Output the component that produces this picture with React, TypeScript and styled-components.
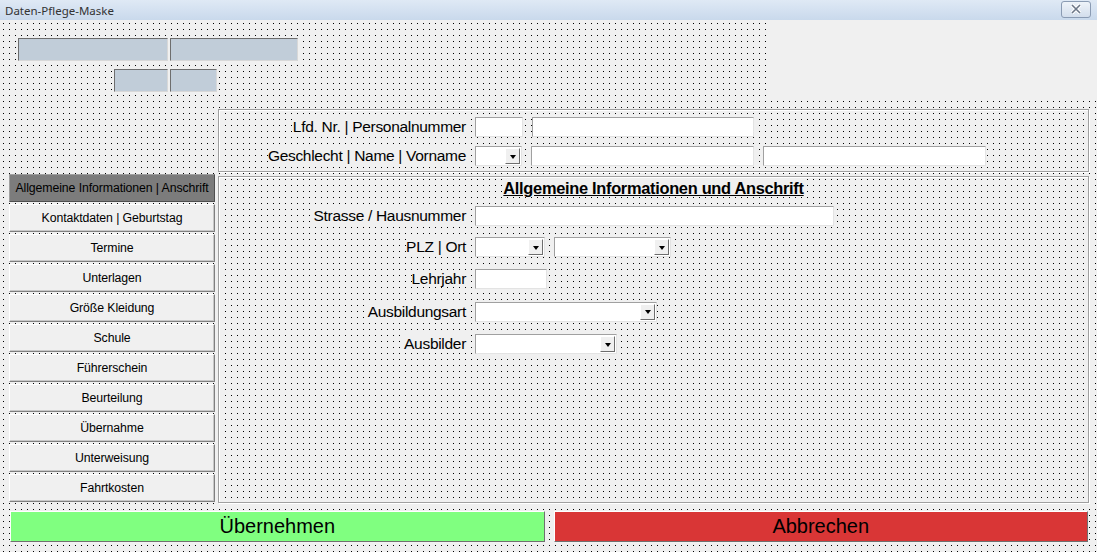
import React from "react";
import styled, { createGlobalStyle } from "styled-components";

const Global = createGlobalStyle`
  html, body { margin: 0; padding: 0; background: #f0f0f0; }
  body { width: 1097px; height: 552px; overflow: hidden; font-family: "Liberation Sans", Arial, sans-serif; }
`;

const dotSvg = encodeURIComponent(
  '<svg xmlns="http://www.w3.org/2000/svg" width="6" height="6"><rect x="0" y="0" width="1" height="1" fill="#000"/></svg>'
);

const dots = `
  background-color: #f0f0f0;
  background-image: url("data:image/svg+xml,${dotSvg}");
  background-size: 6px 6px;
  background-position: 3px 3px;
`;

const Window = styled.div`width:1097px;height:552px;display:flex;flex-direction:column;`;
const TitleBar = styled.div`
  height: 20px; flex: none; display: flex; align-items: center; justify-content: space-between;
  background: linear-gradient(#dfe9f5, #c9d9ec);
  font-family: "Noto Sans", "DejaVu Sans", sans-serif; font-size: 11.5px; color: #333; padding: 0 6px 0 5px;
`;
const CloseBtn = styled.div`
  width: 28px; height: 15px; border: 1px solid #8a9bb3; border-radius: 3px;
  background: linear-gradient(#eef3f9, #d3deec); display: flex; align-items: center; justify-content: center;
  margin-top: -2px;
`;
const Body = styled.div`flex:1;${dots};display:flex;flex-direction:column;`;
const Top = styled.div`height:89px;display:flex;`;
const TopLeft = styled.div`flex:1;display:flex;flex-direction:column;padding:18px 0 0 18px;gap:8px;`;
const TopRow = styled.div<{ $indent?: number }>`display:flex;gap:2px;margin-left:${p => p.$indent || 0}px;`;
const Tile = styled.div<{ $w: number }>`
  width:${p => p.$w}px;height:23px;box-sizing:border-box;background:#c1cdd9;
  border:1px solid #6e6e6e;border-right-color:#d8d8d8;border-bottom-color:#d8d8d8;
`;
const Plain = styled.div`width:327px;height:80px;background:#f0f0f0;`;
const Middle = styled.div`display:flex;padding-left:9px;gap:3px;`;
const Nav = styled.div`width:206px;display:flex;flex-direction:column;gap:2px;margin-top:65px;`;
const NavBtn = styled.div<{ $active?: boolean }>`
  height:28px;box-sizing:border-box;display:flex;align-items:center;justify-content:center;
  font-size:12.3px;color:#000;background:${p => (p.$active ? "#7c7c7c" : "#f0f0f0")};
  border:1px solid;border-color:${p => (p.$active ? "#a0a0a0 #505050 #505050 #a0a0a0" : "#fff #808080 #808080 #fff")};
  box-shadow:${p => (p.$active ? "none" : "inset -1px -1px 0 #c8c8c8")};
  white-space:nowrap;letter-spacing:-0.1px;
`;
const Right = styled.div`width:871px;display:flex;flex-direction:column;gap:4px;`;
const Frame = styled.div<{ $h: number }>`
  height:${p => p.$h}px;box-sizing:border-box;border:1px solid #a0a0a0;box-shadow:inset 1px 1px 0 #fff, 1px 1px 0 #fff;
  display:flex;flex-direction:column;
`;
const Heading = styled.div`
  text-align:center;margin:2px 0 3px 0;
  span{font-weight:bold;font-size:16.4px;text-decoration:underline;letter-spacing:-0.3px;background:#f0f0f0;}
`;
const Row = styled.div<{ $h: number }>`height:${p => p.$h}px;display:flex;align-items:center;gap:9px;`;
const Label = styled.div`
  width:247px;text-align:right;
  span{font-size:15.5px;color:#000;letter-spacing:-0.3px;background:#f0f0f0;}
`;
const Inputs = styled.div`display:flex;gap:9px;align-items:center;`;
const Input = styled.div<{ $w: number }>`
  width:${p => p.$w}px;height:20px;box-sizing:border-box;background:#fff;
  border:1px solid #a0a0a0;border-right-color:#e3e3e3;border-bottom-color:#e3e3e3;position:relative;
`;
const Arrow = styled.div`
  position:absolute;right:1px;top:1px;bottom:1px;width:15px;background:#f0f0f0;box-sizing:border-box;
  border:1px solid;border-color:#fff #6e6e6e #6e6e6e #fff;display:flex;align-items:center;justify-content:center;
  &::after{content:"";border-left:3.5px solid transparent;border-right:3.5px solid transparent;border-top:4px solid #000;margin-top:1px;}
`;
const Bottom = styled.div`display:flex;gap:9px;padding:8px 9px 0 10px;`;
const BigBtn = styled.div<{ $bg: string }>`
  flex:1;height:31px;box-sizing:border-box;background:${p => p.$bg};display:flex;align-items:center;justify-content:center;
  font-size:20px;color:#000;border:1px solid;border-color:#fff #707070 #707070 #fff;
`;

const Combo = ({ w }: { w: number }) => (
  <Input $w={w}>
    <Arrow />
  </Input>
);

const navItems = [
  "Allgemeine Informationen | Anschrift",
  "Kontaktdaten | Geburtstag",
  "Termine",
  "Unterlagen",
  "Größe Kleidung",
  "Schule",
  "Führerschein",
  "Beurteilung",
  "Übernahme",
  "Unterweisung",
  "Fahrtkosten",
];

const L = ({ children }: { children: string }) => (
  <Label>
    <span>{children}</span>
  </Label>
);

export default function App() {
  return (
    <Window>
      <Global />
      <TitleBar>
        <span>Daten-Pflege-Maske</span>
        <CloseBtn>
          <svg width="14" height="10" viewBox="0 0 14 10">
            <path d="M3 1 L11 9 M11 1 L3 9" stroke="#fff" strokeWidth="3.5" />
            <path d="M3 1 L11 9 M11 1 L3 9" stroke="#6b7687" strokeWidth="1.6" />
          </svg>
        </CloseBtn>
      </TitleBar>
      <Body>
        <Top>
          <TopLeft>
            <TopRow>
              <Tile $w={150} />
              <Tile $w={128} />
            </TopRow>
            <TopRow $indent={96}>
              <Tile $w={54} />
              <Tile $w={47} />
            </TopRow>
          </TopLeft>
          <Plain />
        </Top>
        <Middle>
          <Nav>
            {navItems.map((t, i) => (
              <NavBtn key={t} $active={i === 0}>{t}</NavBtn>
            ))}
          </Nav>
          <Right>
            <Frame $h={63}>
              <Row $h={31} style={{ marginTop: 2 }}>
                <L>Lfd. Nr. | Personalnummer</L>
                <Inputs>
                  <Input $w={48} />
                  <Input $w={222} />
                </Inputs>
              </Row>
              <Row $h={31}>
                <L>Geschlecht | Name | Vorname</L>
                <Inputs>
                  <Combo w={47} />
                  <Input $w={223} />
                  <Input $w={223} />
                </Inputs>
              </Row>
            </Frame>
            <Frame $h={327}>
              <Heading>
                <span>Allgemeine Informationen und Anschrift</span>
              </Heading>
              <Row $h={30}>
                <L>Strasse / Hausnummer</L>
                <Input $w={359} />
              </Row>
              <Row $h={32}>
                <L>PLZ | Ort</L>
                <Inputs>
                  <Combo w={70} />
                  <Combo w={117} />
                </Inputs>
              </Row>
              <Row $h={32}>
                <L>Lehrjahr</L>
                <Input $w={72} />
              </Row>
              <Row $h={33}>
                <L>Ausbildungsart</L>
                <Combo w={182} />
              </Row>
              <Row $h={32}>
                <L>Ausbilder</L>
                <Combo w={142} />
              </Row>
            </Frame>
          </Right>
        </Middle>
        <Bottom>
          <BigBtn $bg="#80ff80">Übernehmen</BigBtn>
          <BigBtn $bg="#d93636">Abbrechen</BigBtn>
        </Bottom>
      </Body>
    </Window>
  );
}
